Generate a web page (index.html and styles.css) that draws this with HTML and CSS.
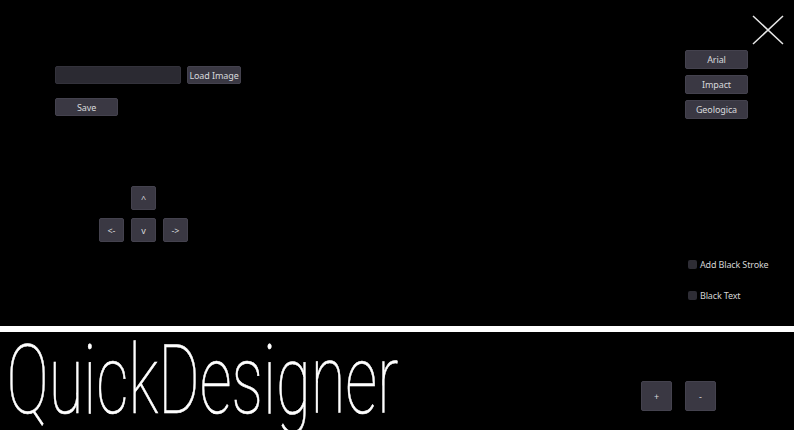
FILE: index.html
```html
<!DOCTYPE html>
<html lang="en">
<head>
    <meta charset="UTF-8">
    <title>QuickDesigner</title>
    <link rel="stylesheet" href="styles.css">
</head>
<body>
    <div class="stage">
        <div class="left">
            <div class="load-row">
                <input type="text" class="path-field">
                <button class="btn load-btn">Load Image</button>
            </div>
            <button class="btn save-btn">Save</button>

            <!-- arrow pad -->
            <div class="pad">
                <span></span>
                <button class="btn pad-btn">^</button>
                <span></span>
                <button class="btn pad-btn">&lt;-</button>
                <button class="btn pad-btn">v</button>
                <button class="btn pad-btn">-&gt;</button>
            </div>
        </div>

        <div class="right">
            <div class="close-row">
                <svg class="close" width="32" height="30" viewBox="0 0 32 30">
                    <path d="M1 1 L31 29 M31 1 L1 29" stroke="#e6e6e6" stroke-width="1.5" fill="none"/>
                </svg>
            </div>
            <div class="fonts">
                <button class="btn font-btn">Arial</button>
                <button class="btn font-btn">Impact</button>
                <button class="btn font-btn">Geologica</button>
            </div>
            <div class="checks">
                <label class="check"><span class="box"></span>Add Black Stroke</label>
                <label class="check"><span class="box"></span>Black Text</label>
            </div>
        </div>
    </div>

    <div class="divider"></div>

    <div class="footer">
        <div class="title">QuickDesigner</div>
        <div class="zoom">
            <button class="btn zoom-btn">+</button>
            <button class="btn zoom-btn">-</button>
        </div>
    </div>
</body>
</html>
```

FILE: styles.css
```css
html, body {
    margin: 0;
    padding: 0;
    background: #000;
    width: 794px;
    height: 430px;
    overflow: hidden;
    font-family: "Noto Sans", "DejaVu Sans", sans-serif;
    color: #dcdcdc;
}
.stage {
    height: 326px;
    display: flex;
}
.btn {
    box-sizing: border-box;
    margin: 0;
    padding: 0;
    background: #3a3843;
    border: 1px solid #44424e;
    border-radius: 2px;
    color: #d8d8dc;
    font-family: "Noto Sans", "DejaVu Sans", sans-serif;
    font-size: 9px;
    letter-spacing: -0.1px;
    line-height: 1;
    white-space: nowrap;
    display: flex;
    align-items: center;
    justify-content: center;
}
.left {
    padding: 66px 0 0 55px;
}
.load-row {
    display: flex;
    gap: 6px;
}
.path-field {
    box-sizing: border-box;
    width: 126px;
    height: 18px;
    margin: 0;
    background: #2b2a32;
    border: 1px solid #33323b;
    border-radius: 2px;
}
.load-btn {
    width: 54px;
    height: 18px;
}
.save-btn {
    width: 63px;
    height: 18px;
    margin-top: 14px;
}
.pad {
    display: grid;
    grid-template-columns: repeat(3, 25px);
    grid-auto-rows: 24px;
    gap: 8px 7px;
    margin: 70px 0 0 44px;
}
.right {
    margin-left: auto;
    width: 109px;
}
.close-row {
    display: flex;
    justify-content: flex-end;
    padding: 15px 10px 0 0;
}
.fonts {
    display: flex;
    flex-direction: column;
    gap: 6px;
    margin-top: 5px;
}
.font-btn {
    width: 63px;
    height: 19px;
}
.checks {
    display: flex;
    flex-direction: column;
    gap: 16px;
    margin: 138px 0 0 3px;
}
.check {
    display: flex;
    align-items: center;
    gap: 3px;
    font-size: 9px;
    letter-spacing: -0.15px;
    height: 15px;
    color: #d4d4d4;
}
.box {
    width: 9px;
    height: 9px;
    background: #2e2d35;
    border-radius: 2px;
}
.divider {
    height: 6px;
    background: #fff;
}
.footer {
    display: flex;
    height: 98px;
}
.title {
    flex: 1;
    font-family: Roboto, sans-serif;
    font-weight: 100;
    font-size: 97px;
    line-height: 1;
    color: #fff;
    -webkit-text-stroke: 0.6px #fff;
    white-space: nowrap;
    padding-left: 10px;
    transform: scaleX(0.652);
    transform-origin: left top;
}
.zoom {
    display: flex;
    gap: 13px;
    padding: 49px 78px 0 0;
}
.zoom-btn {
    width: 31px;
    height: 30px;
}
```
